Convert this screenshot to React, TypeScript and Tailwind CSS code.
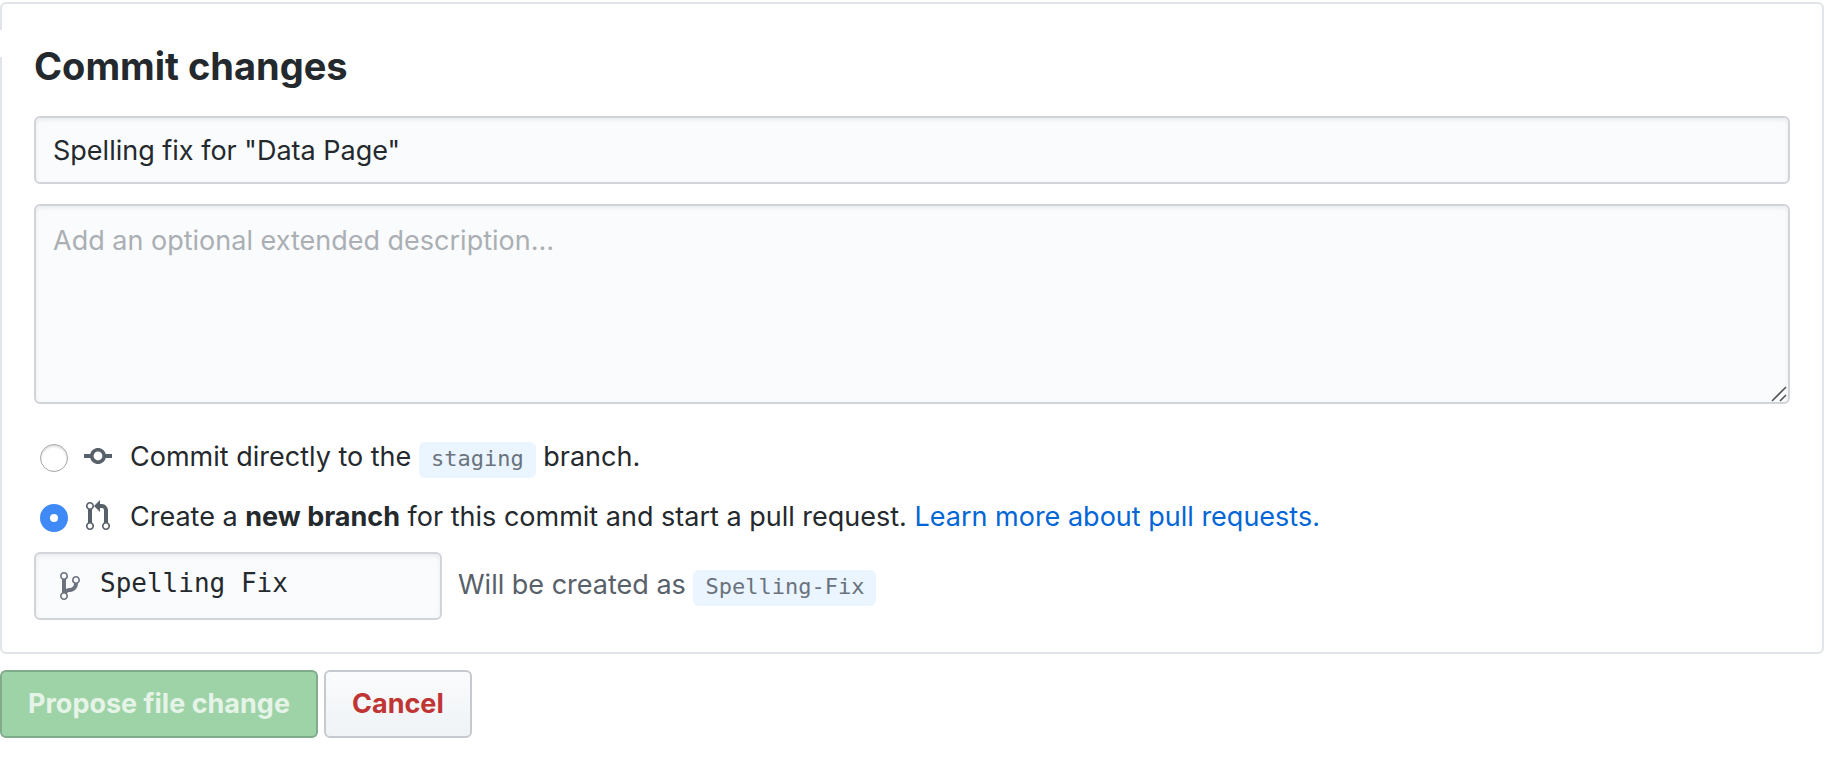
import React, { useState } from 'react';

const fieldStyles =
  'rounded-[6px] border-2 border-[#d1d5da] bg-[#fafbfc] text-[#24292e] shadow-[inset_0_2px_4px_rgba(27,31,35,0.075)] outline-none';

interface IconProps {
  className?: string;
}

function CommitIcon({ className }: IconProps) {
  return (
    <svg viewBox="0 0 14 16" width="28" height="32" fill="currentColor" className={className} aria-hidden="true">
      <path
        fillRule="evenodd"
        d="M10.86 7c-.45-1.72-2-3-3.86-3-1.86 0-3.41 1.28-3.86 3H0v2h3.14c.45 1.72 2 3 3.86 3 1.86 0 3.41-1.28 3.86-3H14V7h-3.14zM7 10.2c-1.22 0-2.2-.98-2.2-2.2 0-1.22.98-2.2 2.2-2.2 1.22 0 2.2.98 2.2 2.2 0 1.22-.98 2.2-2.2 2.2z"
      />
    </svg>
  );
}

function PullRequestIcon({ className }: IconProps) {
  return (
    <svg viewBox="0 0 12 16" width="24" height="32" fill="currentColor" className={className} aria-hidden="true">
      <path
        fillRule="evenodd"
        d="M11 11.28V5c-.03-.78-.34-1.47-.94-2.06C9.46 2.35 8.78 2.03 8 2H7V0L4 3l3 3V4h1c.27.02.48.11.69.31.21.2.3.42.31.69v6.28A1.993 1.993 0 0 0 10 15a1.993 1.993 0 0 0 1-3.72zm-1 2.92c-.66 0-1.2-.55-1.2-1.2 0-.65.55-1.2 1.2-1.2.65 0 1.2.55 1.2 1.2 0 .65-.55 1.2-1.2 1.2zM4 3c0-1.11-.89-2-2-2a1.993 1.993 0 0 0-1 3.72v6.56A1.993 1.993 0 0 0 2 15a1.993 1.993 0 0 0 1-3.72V4.72c.59-.34 1-.98 1-1.72zm-.8 10c0 .66-.55 1.2-1.2 1.2-.65 0-1.2-.55-1.2-1.2 0-.65.55-1.2 1.2-1.2.65 0 1.2.55 1.2 1.2zM2 4.2C1.34 4.2.8 3.65.8 3c0-.65.55-1.2 1.2-1.2.65 0 1.2.55 1.2 1.2 0 .65-.55 1.2-1.2 1.2z"
      />
    </svg>
  );
}

function BranchIcon({ className }: IconProps) {
  return (
    <svg viewBox="0 0 10 16" width="20" height="32" fill="currentColor" className={className} aria-hidden="true">
      <path
        fillRule="evenodd"
        d="M10 5c0-1.11-.89-2-2-2a1.993 1.993 0 0 0-1 3.72v.3c-.02.52-.23.98-.63 1.38-.4.4-.86.61-1.38.63-.83.02-1.48.16-2 .45V4.72a1.993 1.993 0 0 0-1-3.72C.88 1 0 1.89 0 3a2 2 0 0 0 1 1.72v6.56c-.59.35-1 .99-1 1.72 0 1.11.89 2 2 2 1.11 0 2-.89 2-2 0-.53-.2-1-.53-1.36.09-.06.48-.41.59-.47.25-.11.56-.17.94-.17 1.05-.05 1.95-.45 2.75-1.25S8.95 7.77 9 6.73h-.02C9.59 6.37 10 5.73 10 5zM2 1.8c.66 0 1.2.55 1.2 1.2 0 .65-.55 1.2-1.2 1.2C1.35 4.2.8 3.65.8 3c0-.65.55-1.2 1.2-1.2zm0 12.41c-.66 0-1.2-.55-1.2-1.2 0-.65.55-1.2 1.2-1.2.65 0 1.2.55 1.2 1.2 0 .65-.55 1.2-1.2 1.2zm6-8c-.66 0-1.2-.55-1.2-1.2 0-.65.55-1.2 1.2-1.2.65 0 1.2.55 1.2 1.2 0 .65-.55 1.2-1.2 1.2z"
      />
    </svg>
  );
}

function BranchName({ children }: { children: React.ReactNode }) {
  return (
    <code className="rounded-[6px] bg-[#eaf5ff] px-3 pt-1 pb-[7px] font-['DejaVu_Sans_Mono',monospace] text-[22px] leading-none text-[#6a737d]">
      {children}
    </code>
  );
}

interface TargetOptionProps {
  value: string;
  checked: boolean;
  onSelect: (value: string) => void;
  icon: React.ReactNode;
  children: React.ReactNode;
}

function TargetOption({ value, checked, onSelect, icon, children }: TargetOptionProps) {
  return (
    <div className="flex items-center">
      <input
        type="radio"
        name="commit-target"
        id={`target-${value}`}
        value={value}
        checked={checked}
        onChange={() => onSelect(value)}
        className="mt-1 size-7 shrink-0 appearance-none rounded-full border border-[#a6a6a6] bg-white shadow-[inset_0_2px_2px_rgba(0,0,0,0.12)] checked:border-[10px] checked:border-[#408af7] checked:shadow-none"
      />
      <label htmlFor={`target-${value}`} className="flex items-center">
        <span className="flex w-[62px] justify-center pr-0.5 text-[#586069]">{icon}</span>
        <span className="pt-0.5 leading-10">{children}</span>
      </label>
    </div>
  );
}

export default function App() {
  const [title, setTitle] = useState('Spelling fix for "Data Page"');
  const [description, setDescription] = useState('');
  const [target, setTarget] = useState('new-branch');
  const [branch, setBranch] = useState('Spelling Fix');

  return (
    <form
      className="bg-white pt-0.5 font-['Inter',sans-serif] text-[27px] text-[#24292e]"
      onSubmit={(e) => e.preventDefault()}
    >
      {/* Commit details */}
      <div className="relative mr-2.5 rounded-[6px] border-2 border-[#e1e4e8] p-8">
        {/* Gap in the left border where the caret meets the card */}
        <span className="absolute top-[26px] -left-0.5 h-[27px] w-0.5 bg-white" />

        <h3 className="mb-[22px] pt-0.5 text-[38px] leading-[56px] font-bold">Commit changes</h3>

        <input
          type="text"
          aria-label="Commit message"
          value={title}
          onChange={(e) => setTitle(e.target.value)}
          className={`${fieldStyles} block h-[68px] w-full px-[17px]`}
        />

        <div className="relative mt-5">
          <textarea
            aria-label="Extended description"
            placeholder="Add an optional extended description…"
            value={description}
            onChange={(e) => setDescription(e.target.value)}
            className={`${fieldStyles} block h-[200px] w-full resize-none px-[17px] py-3.5 leading-[42px] placeholder:text-[#aaafb4]`}
          />
          <svg
            viewBox="0 0 16 16"
            width="16"
            height="16"
            stroke="#555"
            strokeWidth="1.6"
            className="pointer-events-none absolute right-[3px] bottom-0.5"
            aria-hidden="true"
          >
            <path d="M1 15 15 1M9 15l6-6" />
          </svg>
        </div>

        {/* Where the commit goes */}
        <div className="mt-[31px] flex flex-col gap-[15px]">
          <div className="flex flex-col gap-[18px] pl-1.5">
            <TargetOption
              value="direct"
              checked={target === 'direct'}
              onSelect={setTarget}
              icon={<CommitIcon />}
            >
              Commit directly to the <BranchName>staging</BranchName> branch.
            </TargetOption>
            <TargetOption
              value="new-branch"
              checked={target === 'new-branch'}
              onSelect={setTarget}
              icon={<PullRequestIcon />}
            >
              Create a <strong className="font-bold">new branch</strong> for this commit and start a pull
              request.{' '}
              <a href="#pull-requests" className="text-[#0366d6] hover:underline">
                Learn more about pull requests.
              </a>
            </TargetOption>
          </div>

          <div className="flex items-center gap-4">
            <div className="relative">
              <BranchIcon className="pointer-events-none absolute top-[18px] left-[26px] text-[#6a737d]" />
              <input
                type="text"
                aria-label="New branch name"
                value={branch}
                onChange={(e) => setBranch(e.target.value)}
                className={`${fieldStyles} block h-[68px] w-[408px] pr-4 pb-1.5 pl-16 font-['DejaVu_Sans_Mono',monospace] text-[26px]`}
              />
            </div>
            <p className="pb-0.5 leading-[42px] text-[#586069]">
              Will be created as <BranchName>{branch.trim().replace(/\s+/g, '-')}</BranchName>
            </p>
          </div>
        </div>
      </div>

      {/* Actions */}
      <div className="mt-4 flex gap-1.5 font-bold">
        <button
          type="submit"
          disabled
          className="h-[68px] rounded-[6px] border-2 border-[#82ab8b] bg-[#9ed2a7] px-[26px] text-[#e6f4e8]"
        >
          Propose file change
        </button>
        <button
          type="button"
          className="h-[68px] rounded-[6px] border-2 border-[#c6cace] bg-linear-to-b from-[#fafbfc] to-[#eff3f6] px-[26px] text-[#c03434]"
        >
          Cancel
        </button>
      </div>
    </form>
  );
}
